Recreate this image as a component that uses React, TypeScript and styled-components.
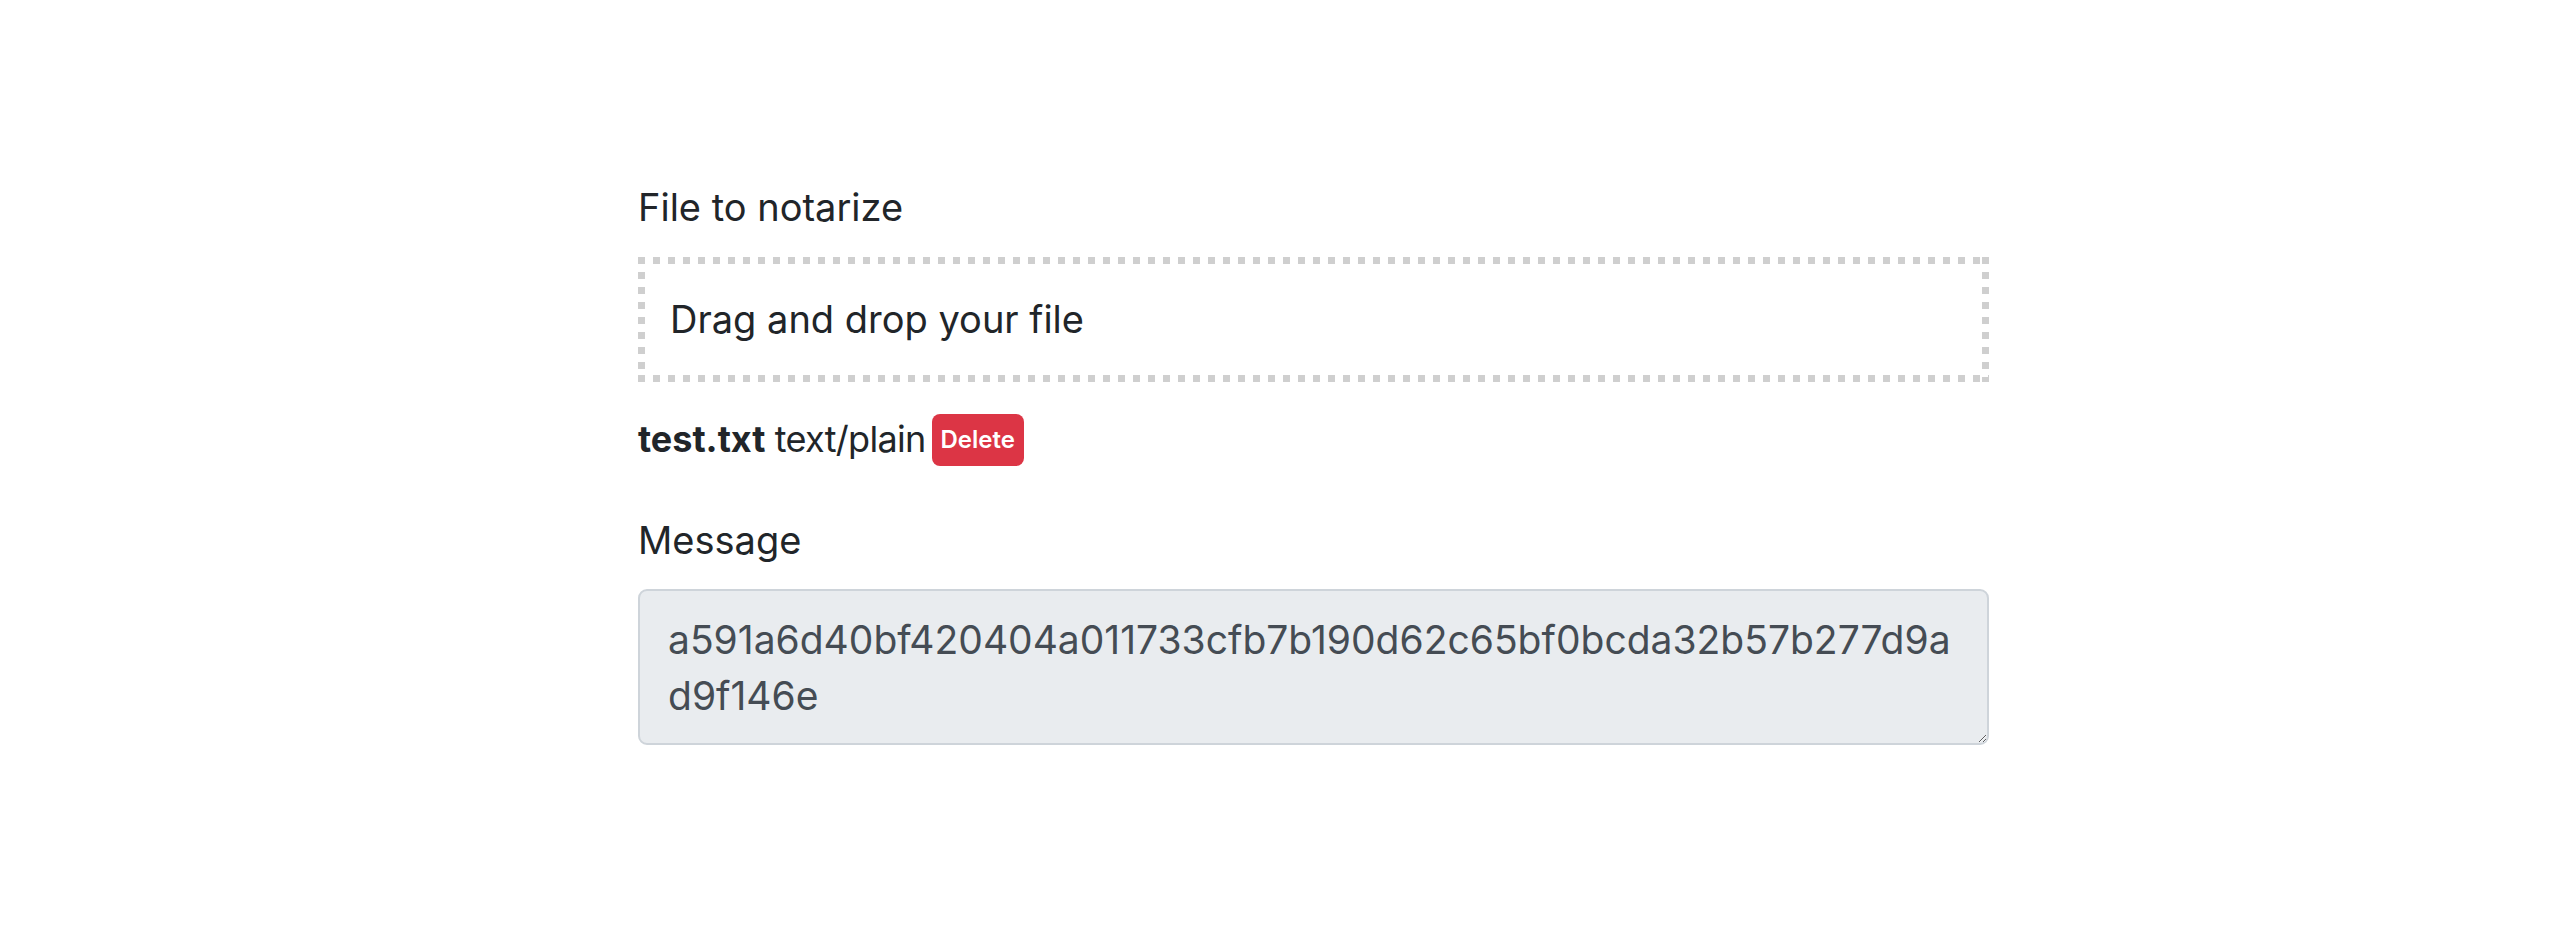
import React from "react";
import styled, { createGlobalStyle } from "styled-components";

const GlobalStyle = createGlobalStyle`
  html, body { margin: 0; padding: 0; background: #ffffff; }
  body { font-family: Inter, "Noto Sans", "Liberation Sans", sans-serif; color: #212529; }
`;

const Page = styled.main`
  padding: 180px 0 0 638px;
  box-sizing: border-box;
  min-height: 927px;
`;

const Form = styled.form`
  width: 1351px;
  display: flex;
  flex-direction: column;
`;

const Group = styled.div<{ $top?: number }>`
  display: flex;
  flex-direction: column;
  margin-top: ${(p) => p.$top ?? 0}px;
`;

const Label = styled.label<{ $gap: number }>`
  font-size: 38px;
  line-height: 55px;
  font-weight: 400;
  margin-bottom: ${(p) => p.$gap}px;
`;

const DOT = "#cfcfcf";

const DropZone = styled.div`
  box-sizing: border-box;
  height: 125px;
  padding: 0 28px 0 32px;
  display: flex;
  align-items: center;
  font-size: 38px;
  line-height: 55px;
  cursor: pointer;
  background:
    linear-gradient(to right, ${DOT} 50%, transparent 50%) top left / 15px 7px repeat-x,
    linear-gradient(to right, ${DOT} 50%, transparent 50%) bottom left / 15px 7px repeat-x,
    linear-gradient(to bottom, ${DOT} 50%, transparent 50%) top left / 7px 15px repeat-y,
    linear-gradient(to bottom, ${DOT} 50%, transparent 50%) top right / 7px 15px repeat-y;
`;

const FileRow = styled.div`
  margin-top: 30px;
  height: 55px;
  display: flex;
  align-items: center;
  font-size: 36px;
  line-height: 55px;
  white-space: pre;
`;

const FileName = styled.strong`
  font-weight: 700;
`;

const FileType = styled.span`
  letter-spacing: -0.7px;
`;

const Badge = styled.button`
  margin-left: 6px;
  height: 52px;
  padding: 0 9px;
  border: none;
  border-radius: 8px;
  background: #dc3545;
  color: #ffffff;
  font-family: Inter, "Noto Sans", sans-serif;
  font-size: 24px;
  font-weight: 600;
  line-height: 52px;
  cursor: pointer;
`;

const TextArea = styled.textarea`
  box-sizing: border-box;
  width: 100%;
  height: 156px;
  padding: 21px 28px 11px 28px;
  border: 2px solid #ced4da;
  border-radius: 9px;
  background: #e9ecef;
  color: #454c54;
  font-family: Inter, "Noto Sans", "Liberation Sans", sans-serif;
  font-size: 39px;
  line-height: 56px;
  resize: vertical;
  outline: none;
  display: block;
`;

export default function App() {
  const hash = "a591a6d40bf420404a011733cfb7b190d62c65bf0bcda32b57b277d9ad9f146e";
  return (
    <>
      <GlobalStyle />
      <Page>
        <Form onSubmit={(e) => e.preventDefault()}>
          <Group>
            <Label $gap={22}>File to notarize</Label>
            <DropZone>Drag and drop your file</DropZone>
          </Group>
          <FileRow>
            <FileName>test.txt</FileName>
            <FileType> text/plain</FileType>
            <Badge type="button">Delete</Badge>
          </FileRow>
          <Group $top={46}>
            <Label $gap={21}>Message</Label>
            <TextArea readOnly value={hash} />
          </Group>
        </Form>
      </Page>
    </>
  );
}
